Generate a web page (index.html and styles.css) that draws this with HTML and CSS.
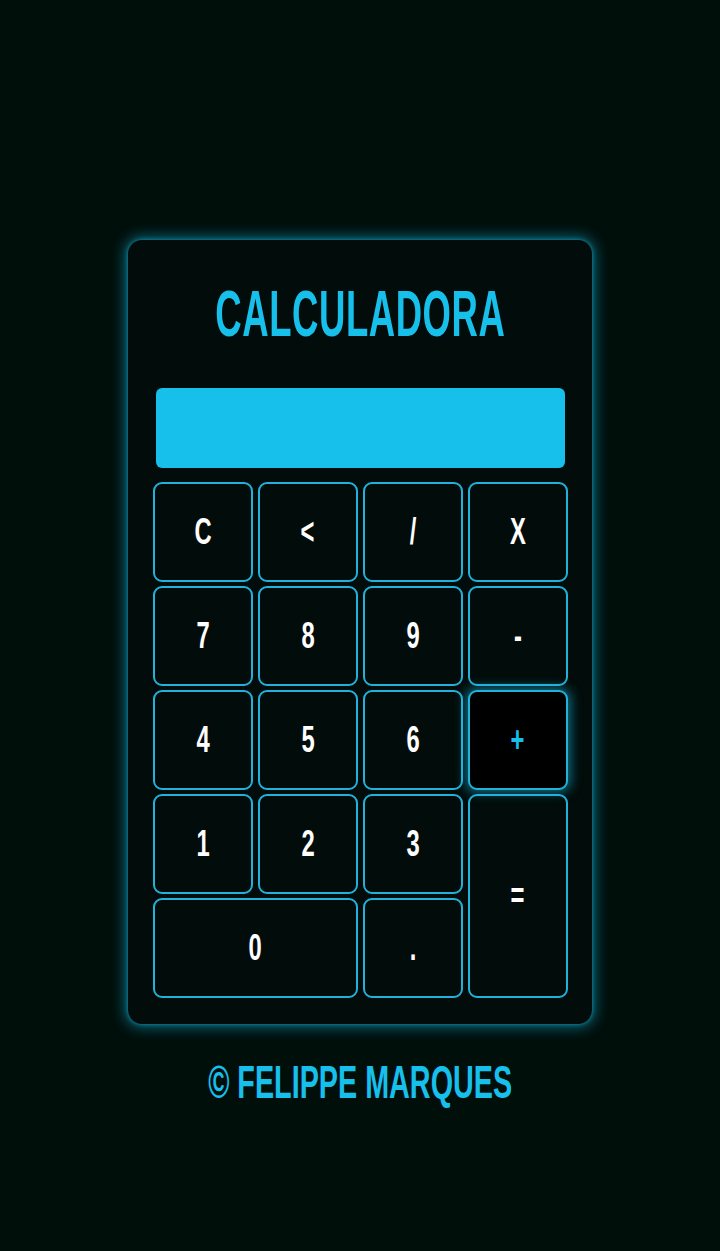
FILE: index.html
```html
<!DOCTYPE html>
<html lang="pt-BR">
<head>
<meta charset="utf-8">
<title>Calculadora</title>
<link rel="stylesheet" href="styles.css">
</head>
<body>
<main class="page">
  <section class="calc">
    <h1 class="title"><span class="squeeze">CALCULADORA</span></h1>
    <div class="display"></div>
    <div class="keys">
      <button class="key"><span class="squeeze">C</span></button>
      <button class="key"><span class="squeeze">&lt;</span></button>
      <button class="key"><span class="squeeze">/</span></button>
      <button class="key"><span class="squeeze">X</span></button>
      <button class="key"><span class="squeeze">7</span></button>
      <button class="key"><span class="squeeze">8</span></button>
      <button class="key"><span class="squeeze">9</span></button>
      <button class="key"><span class="squeeze">-</span></button>
      <button class="key"><span class="squeeze">4</span></button>
      <button class="key"><span class="squeeze">5</span></button>
      <button class="key"><span class="squeeze">6</span></button>
      <button class="key key-active"><span class="squeeze">+</span></button>
      <button class="key"><span class="squeeze">1</span></button>
      <button class="key"><span class="squeeze">2</span></button>
      <button class="key"><span class="squeeze">3</span></button>
      <button class="key key-equals"><span class="squeeze">=</span></button>
      <button class="key key-zero"><span class="squeeze">0</span></button>
      <button class="key"><span class="squeeze">.</span></button>
    </div>
  </section>
  <footer class="credit"><span class="squeeze">© FELIPPE MARQUES</span></footer>
</main>
</body>
</html>
```
FILE: styles.css
```css
* { box-sizing: border-box; }

html, body {
  margin: 0;
  padding: 0;
  background: #010f0b;
  height: 100%;
}

body {
  font-family: "Liberation Sans Narrow", "Liberation Sans", "DejaVu Sans Condensed", sans-serif;
  font-weight: 700;
}

.page {
  display: flex;
  flex-direction: column;
  align-items: center;
  padding-top: 240px;
}

.calc {
  width: 464px;
  background: #020c0a;
  border-radius: 14px;
  padding: 0 24px 26px 25px;
  box-shadow: 0 0 14px 3px rgba(23, 191, 235, 0.5), 0 0 4px rgba(23, 191, 235, 0.6);
  display: flex;
  flex-direction: column;
}

.squeeze {
  display: inline-block;
  transform: scaleX(0.66);
}

.title {
  margin: 0;
  height: 148px;
  display: flex;
  align-items: center;
  justify-content: center;
  color: #17bfeb;
  font-size: 64px;
  line-height: 1;
  letter-spacing: 1px;
}

.title .squeeze {
  transform: scaleX(0.57);
}

.display {
  height: 80px;
  margin: 0 3px 14px 3px;
  background: #17bfeb;
  border-radius: 6px;
}

.keys {
  display: grid;
  grid-template-columns: repeat(4, 1fr);
  grid-auto-rows: 100px;
  column-gap: 5px;
  row-gap: 4px;
}

.key {
  background: transparent;
  border: 2px solid #21b2dc;
  border-radius: 9px;
  color: #ffffff;
  font-family: inherit;
  font-weight: 700;
  font-size: 36px;
  padding: 0;
  display: flex;
  align-items: center;
  justify-content: center;
}

.key-active {
  background: #000000;
  color: #17bfeb;
  box-shadow: 0 0 12px 2px rgba(23, 191, 235, 0.6);
}

.key-equals {
  grid-row: span 2;
}

.key-zero {
  grid-column: span 2;
}

.credit {
  margin-top: 35px;
  color: #17bfeb;
  font-size: 46px;
  line-height: 1;
}

.credit .squeeze {
  transform: scaleX(0.625);
}
```
